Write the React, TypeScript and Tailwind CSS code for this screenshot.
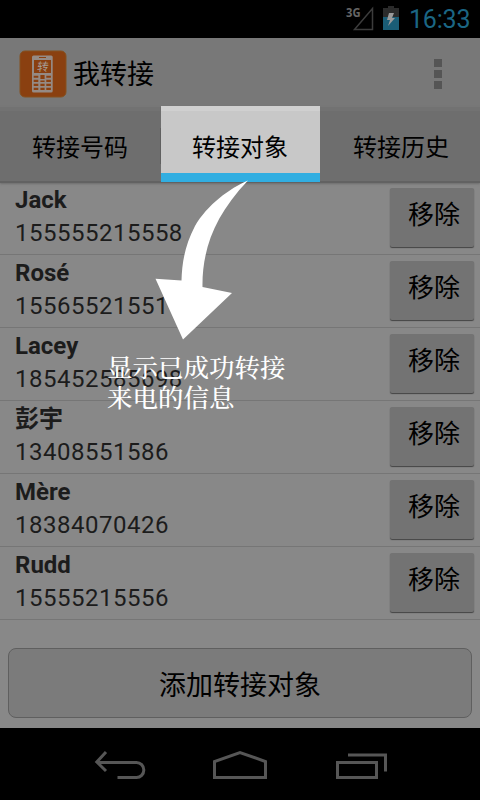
import React from "react";

const contacts = [
  { name: "Jack", phone: "155555215558" },
  { name: "Rosé", phone: "15565521551" },
  { name: "Lacey", phone: "185452585698" },
  { name: "彭宇", phone: "13408551586" },
  { name: "Mère", phone: "18384070426" },
  { name: "Rudd", phone: "15555215556" },
];

function StatusBar() {
  return (
    <div className="flex h-[38px] shrink-0 items-start bg-black">
      <div className="flex w-[27px] ml-[346px] pt-[5px]">
        <svg width="28" height="27" viewBox="0 0 28 27" className="overflow-visible">
          <path d="M8.5 24.5 L26.5 3.5 V24.5 Z" fill="none" stroke="#3c3c3c" strokeWidth="1.5" />
          <text x="0" y="12" fontSize="13" fontWeight="700" fill="#666" textLength="14.500" lengthAdjust="spacingAndGlyphs" fontFamily="'Open Sans', sans-serif">3G</text>
        </svg>
      </div>
      <svg width="16" height="24" viewBox="0 0 16 24" className="ml-[10px] mt-[6px]">
        <path d="M5 0h6v2h5v9H0V2h5z" fill="#2b2b2b" />
        <path d="M0 11h16v13H0z" fill="#1a5d76" />
        <path d="M6 7h5l-2 5h3l-7 8 2-6H4z" fill="#9a9a9a" />
      </svg>
      <div className="ml-[10px] mt-[5px] whitespace-nowrap text-[25px] leading-[30px] tracking-[-0.2px] text-[#1b6684]">16:33</div>
    </div>
  );
}

function AppIcon() {
  return (
    <svg width="48" height="48" viewBox="0 0 48 48">
      <rect x="1" y="1" width="46" height="46" rx="5" fill="#8a4010" stroke="#85501f" strokeWidth="1" />
      <rect x="13" y="5.500" width="20.700" height="37" rx="1.500" fill="#958a84" />
      <g fill="#8a4010">
        <rect x="20" y="7" width="7" height="1" />
        <rect x="15" y="10" width="17" height="13" />
        <path d="M14.700 25.800h4.600v2h-4.600zM27.300 25.800h4.600v2h-4.600zM21.400 25h4.200v4h-4.200z" />
        <path d="M14.700 29.800h4.600v2.200h-4.600zM21.400 30.500h4.200v1.500h-4.200zM27.300 29.800h4.600v2.200h-4.600z" />
        <path d="M14.700 33.800h4.600v2.200h-4.600zM21.400 33.800h4.200v2.200h-4.200zM27.300 33.800h4.600v2.200h-4.600z" />
        <path d="M14.700 37.800h4.600v2.200h-4.600zM21.400 37.800h4.200v2.200h-4.200zM27.300 37.800h4.600v2.200h-4.600z" />
      </g>
      <text x="20" y="21" fontSize="11.500" fill="#a59c94" fontWeight="400" transform="skewX(-6)" fontFamily="'Noto Sans CJK SC', sans-serif">转</text>
    </svg>
  );
}

function Header() {
  return (
    <header className="flex h-[69px] shrink-0 items-start bg-[#787878]">
      <div className="ml-[19px] mt-[12px]"><AppIcon /></div>
      <h1 className="ml-[6px] mt-[17px] text-[27px] leading-[40px] font-normal">我转接</h1>
      <div className="ml-auto mr-[38px] mt-[21px] flex flex-col gap-[3px]">
        <span className="size-2 bg-[#555]" />
        <span className="size-2 bg-[#555]" />
        <span className="size-2 bg-[#555]" />
      </div>
    </header>
  );
}

function Tabs() {
  const tab = "flex h-[74px] items-center justify-center border-t-4 border-[#727272] bg-[#6e6e6e] pt-[4px] text-2xl";
  return (
    <nav className="flex h-[76px] shrink-0 border-b-2 border-[#626262] bg-[#6e6e6e] shadow-[0_1px_2px_#6d6d6d]">
      <div className={tab + " w-[160px]"}>转接号码</div>
      <div className="my-[21px] h-[36px] w-px bg-[#606060]" />
      <div className="relative z-10 -mt-px flex h-[76px] w-[159px] items-center justify-center border-t-[5px] border-b-[9px] border-t-[#d0d0d0] border-b-[#31aee1] bg-[#c8c8c8] pt-[11px] pr-[1px] text-2xl">转接对象</div>
      <div className={tab + " w-[160px] pl-[2px]"}>转接历史</div>
    </nav>
  );
}

function Guide() {
  return (
    <div className="pointer-events-none absolute left-[107px] top-[180px] z-20 text-white">
      <svg width="190" height="170" viewBox="107 180 190 170" className="block">
        <path fill="#fff" d="M248 180.500C230 188 207 205 195 226C184 247 182 265 181.500 280.500L155.500 278.800L183 339.500L232 293L202.500 287C202 252 213 217 248 180.500Z" />
      </svg>
      <p className="mt-px whitespace-nowrap text-[25.500px] leading-[30px] font-medium font-['Noto_Serif_CJK_SC','Noto_Sans_CJK_SC',serif]">显示已成功转接<br />来电的信息</p>
    </div>
  );
}

function NavigationBar() {
  return (
    <footer className="h-[72px] shrink-0 bg-black">
      <svg width="480" height="72" viewBox="0 728 480 72" fill="none" stroke="#565656" strokeWidth="3">
        <path d="M98 762.500H136.500a7.300 7.300 0 0 1 7.300 7.300v.4a7.300 7.300 0 0 1-7.300 7.300H117.500M106 752l-9.200 10 9.200 9" />
        <path d="M214.500 777.500V761.500L240 752.500L265.500 761.500V777.500Z" />
        <path d="M337.500 762.500H376.500V777.500H337.500ZM348 755H385.500V771.500" />
      </svg>
    </footer>
  );
}

export default function App() {
  return (
    <div className="relative flex h-[800px] w-[480px] flex-col overflow-hidden bg-[#888] font-[Roboto,'Noto_Sans_CJK_SC',sans-serif] text-black">
      <StatusBar />
      <Header />
      <Tabs />
      <main className="flex flex-1 flex-col">
        <ul className="-mt-px h-[438px]">
          {contacts.map((contact) => (
            <li key={contact.phone} className="flex h-[73px] items-start border-b border-[#767676] text-[#1c1c1c]">
              <div className="ml-[15px] flex-1">
                <div className="h-[34px] text-2xl leading-[36px] font-bold">{contact.name}</div>
                <div className="text-2xl leading-[34px] tracking-[0.5px]">{contact.phone}</div>
              </div>
              <button className="mr-[6px] mt-[6px] h-[59px] w-[84px] rounded-[2px] bg-[#737373] pb-[5px] pl-[4px] text-[26px] leading-[38px] text-black shadow-[0_1px_1px_#444]">移除</button>
            </li>
          ))}
        </ul>
        <button className="mx-2 mt-[28px] h-[70px] rounded-lg border border-[#5f5f5f] bg-[#7b7b7b] pt-[7px] text-[27px]">添加转接对象</button>
      </main>
      <NavigationBar />
      <Guide />
    </div>
  );
}
